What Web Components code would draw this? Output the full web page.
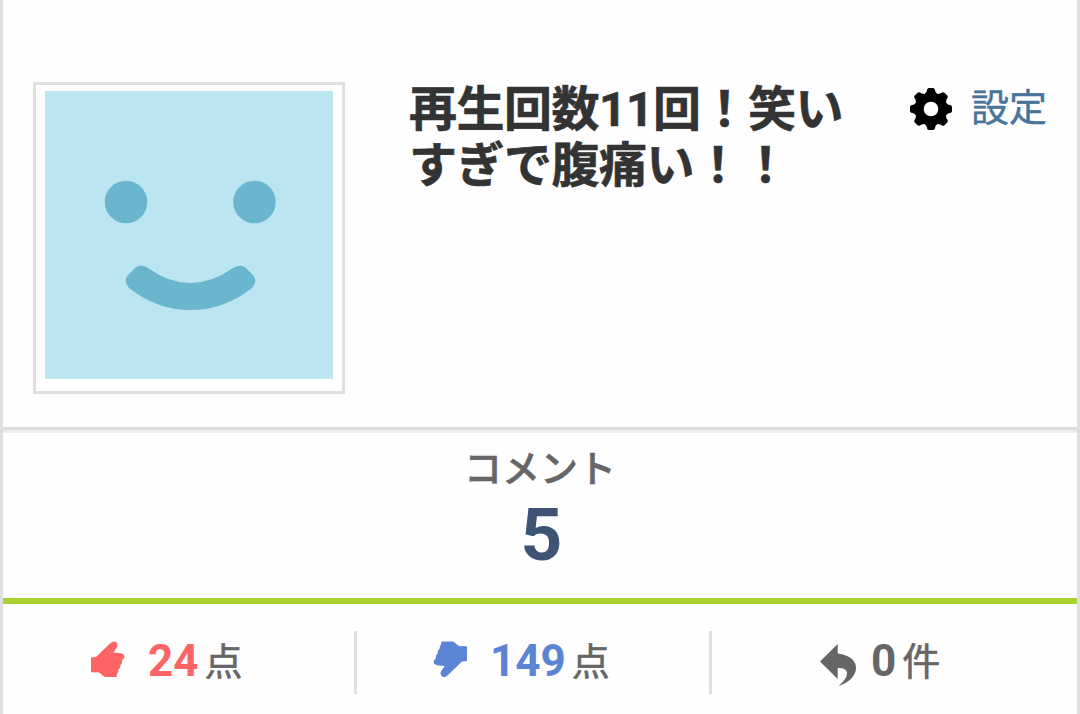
<!DOCTYPE html>
<html lang="ja">
<head>
<meta charset="utf-8">
<title>コメント</title>
<style>
  body {
    margin: 0;
    background: #fefefe;
    font-family: Roboto, "Noto Sans CJK JP", sans-serif;
    color: #333;
  }
</style>
</head>
<body>
<video-panel>
  <panel-header slot="header">
    <user-avatar slot="avatar"></user-avatar>
    <span slot="title">再生回数11回！笑い<br>すぎで腹痛い！！</span>
    <settings-link slot="action">設定</settings-link>
  </panel-header>
  <comment-count value="5">コメント</comment-count>
  <stat-bar slot="footer">
    <stat-item class="first" icon="up" value="24" style="--stat-color: #ff6464">点</stat-item>
    <stat-item class="second" icon="down" value="149" style="--stat-color: #5c84d4">点</stat-item>
    <stat-item class="third" icon="reply" value="0">件</stat-item>
  </stat-bar>
</video-panel>

<script>
(function () {
  function define(name, html, setup) {
    const template = document.createElement("template");
    template.innerHTML = html;

    customElements.define(name, class extends HTMLElement {
      constructor() {
        super();
        this.attachShadow({ mode: "open" });
        this.shadowRoot.appendChild(template.content.cloneNode(true));
      }

      connectedCallback() {
        if (setup) setup(this, this.shadowRoot);
      }
    });
  }

  const hand = "M1 17.5L6 17 20.5 3Q24 .2 26.5 2.500 28.500 5 26.500 8L23.300 12.500 31 13.200Q35.500 14.500 34 18L32.300 20 31.800 23.500 30.500 25 30 28 28.500 29.500 28 32.500 27 34 26.500 37L15 37Q12.500 35.500 10.500 33.500 8 31.500 5 32.500L1 32Z";

  const icons = {
    up: `<svg width="36" height="38" viewBox="0 0 36 38"><path fill="currentColor" d="${hand}"/></svg>`,
    down: `<svg width="36" height="38" viewBox="0 0 36 38"><path fill="currentColor" transform="rotate(180 18 19.200)" d="${hand}"/></svg>`,
    reply: `<svg width="39" height="44" viewBox="0 0 39 44"><path fill="currentColor" d="M1 18.500L18.700 1V10.500Q28 11.500 33 16 37.500 20.500 37 26 35.500 37.500 19.500 43 28.500 35.500 28 29.500 27 24.500 18.700 25V36Z"/></svg>`
  };

  define("video-panel", `
    <style>
      :host {
        display: flex;
        flex-direction: column;
        box-sizing: border-box;
        height: 714px;
        border: solid #e0e0e0;
        border-width: 0 3px;
      }
    </style>
    <slot name="header"></slot>
    <slot></slot>
    <slot name="footer"></slot>
  `);

  define("panel-header", `
    <style>
      :host {
        display: flex;
        align-items: flex-start;
        box-sizing: border-box;
        height: 430px;
        padding: 82px 30px 0 30px;
        border-bottom: 3px solid #dcdcdc;
      }
      h1 {
        flex: 1;
        margin: 0 0 0 64px;
        font-size: 48px;
        line-height: 56px;
        letter-spacing: -0.5px;
        white-space: nowrap;
        -webkit-text-stroke: 0.6px #333;
      }
    </style>
    <slot name="avatar"></slot>
    <h1><slot name="title"></slot></h1>
    <slot name="action"></slot>
  `);

  define("user-avatar", `
    <style>
      :host {
        display: block;
        padding: 6px 9px 12px;
        border: 3px solid #dfdfdf;
        background: #fff;
      }
      svg { display: block; }
    </style>
    <svg width="288" height="288" viewBox="0 0 288 288">
      <rect width="288" height="288" fill="#bbe6f1"/>
      <g fill="#6bb6cf">
        <circle cx="81" cy="111" r="21.300"/>
        <circle cx="209.500" cy="111" r="21.300"/>
        <path d="M83 184L90 177Q96 172 103 177Q145 207 188 177Q196 172 201 177L208 184Q213 190 207 197Q179 219 145.500 219T84 197Q78 190 83 184Z"/>
      </g>
    </svg>
  `);

  define("settings-link", `
    <style>
      :host {
        display: flex;
        align-items: center;
        gap: 19px;
        height: 53px;
        font-size: 38px;
        line-height: 52px;
        color: #48749a;
      }
      svg { display: block; }
      span {
        margin-top: -1px;
        -webkit-text-stroke: 0.4px #48749a;
      }
    </style>
    <svg width="42" height="42" viewBox="-21 -21 42 42">
      <defs><path id="tooth" d="M-7-14L-4.300-17.500Q-4-21-2-21H2Q4-21 4.300-17.500L7-14Z"/></defs>
      <g>
        <use href="#tooth"/>
        <use href="#tooth" transform="rotate(45)"/>
        <use href="#tooth" transform="rotate(90)"/>
        <use href="#tooth" transform="rotate(135)"/>
        <use href="#tooth" transform="rotate(180)"/>
        <use href="#tooth" transform="rotate(225)"/>
        <use href="#tooth" transform="rotate(270)"/>
        <use href="#tooth" transform="rotate(315)"/>
      </g>
      <circle r="11.800" fill="none" stroke="#000" stroke-width="9"/>
    </svg>
    <span><slot></slot></span>
  `);

  define("comment-count", `
    <style>
      :host {
        display: flex;
        flex-direction: column;
        align-items: center;
        box-sizing: border-box;
        height: 174px;
        padding-top: 9px;
        border-top: 3px solid #eee;
        border-bottom: 6px solid #a8d031;
      }
      .label {
        font-size: 38px;
        font-weight: 500;
        line-height: 54px;
        color: #666;
        -webkit-text-stroke: 0.5px #666;
      }
      .value {
        margin-top: -1px;
        margin-left: 3px;
        font-size: 73px;
        font-weight: bold;
        line-height: 80px;
        color: #3d5475;
      }
    </style>
    <div class="label"><slot></slot></div>
    <div class="value"></div>
  `, (host, root) => {
    root.querySelector(".value").textContent = host.getAttribute("value");
  });

  define("stat-bar", `
    <style>
      :host {
        display: grid;
        grid-template-columns: 354px 355px 1fr;
        padding-top: 27px;
      }
    </style>
    <slot></slot>
  `);

  define("stat-item", `
    <style>
      :host {
        display: flex;
        align-items: center;
        box-sizing: border-box;
        height: 63px;
        padding-left: 87px;
        border-right: 3px solid #dfdfdf;
        line-height: 60px;
        color: #666;
      }
      :host(.second) { padding-left: 75px; }
      :host(.third) {
        padding-left: 107px;
        border-right: 0;
      }
      .icon {
        width: 58px;
        margin-top: -7px;
        color: var(--stat-color, #666);
      }
      :host(.third) .icon {
        width: 52px;
        margin-top: 5px;
      }
      .icon svg { display: block; }
      .value {
        margin-top: -4px;
        font-size: 44px;
        font-weight: bold;
        color: var(--stat-color, #666);
      }
      .unit {
        margin: -2px 0 0 6px;
        font-size: 38px;
        -webkit-text-stroke: 0.6px #666;
      }
    </style>
    <div class="icon"></div>
    <div class="value"></div>
    <div class="unit"><slot></slot></div>
  `, (host, root) => {
    root.querySelector(".icon").innerHTML = icons[host.getAttribute("icon")];
    root.querySelector(".value").textContent = host.getAttribute("value");
  });
})();
</script>
</body>
</html>
